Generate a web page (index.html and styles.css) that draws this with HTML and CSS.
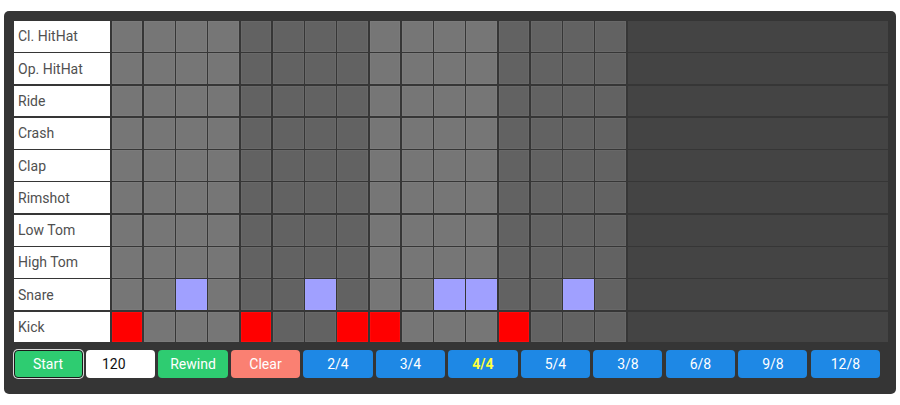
FILE: index.html
```html
<!DOCTYPE html>
<html>
<head>
<meta charset="utf-8">
<link rel="stylesheet" href="styles.css">
</head>
<body>
<div class="machine">
  <div class="grid">
    <div class="label">Cl. HitHat</div>
    <div class="c"></div><div class="c"></div><div class="c"></div><div class="c"></div>
    <div class="c d"></div><div class="c d"></div><div class="c d"></div><div class="c d"></div>
    <div class="c"></div><div class="c"></div><div class="c"></div><div class="c"></div>
    <div class="c d"></div><div class="c d"></div><div class="c d"></div><div class="c d"></div>
    <div class="rest"></div>

    <div class="label">Op. HitHat</div>
    <div class="c"></div><div class="c"></div><div class="c"></div><div class="c"></div>
    <div class="c d"></div><div class="c d"></div><div class="c d"></div><div class="c d"></div>
    <div class="c"></div><div class="c"></div><div class="c"></div><div class="c"></div>
    <div class="c d"></div><div class="c d"></div><div class="c d"></div><div class="c d"></div>
    <div class="rest"></div>

    <div class="label">Ride</div>
    <div class="c"></div><div class="c"></div><div class="c"></div><div class="c"></div>
    <div class="c d"></div><div class="c d"></div><div class="c d"></div><div class="c d"></div>
    <div class="c"></div><div class="c"></div><div class="c"></div><div class="c"></div>
    <div class="c d"></div><div class="c d"></div><div class="c d"></div><div class="c d"></div>
    <div class="rest"></div>

    <div class="label">Crash</div>
    <div class="c"></div><div class="c"></div><div class="c"></div><div class="c"></div>
    <div class="c d"></div><div class="c d"></div><div class="c d"></div><div class="c d"></div>
    <div class="c"></div><div class="c"></div><div class="c"></div><div class="c"></div>
    <div class="c d"></div><div class="c d"></div><div class="c d"></div><div class="c d"></div>
    <div class="rest"></div>

    <div class="label">Clap</div>
    <div class="c"></div><div class="c"></div><div class="c"></div><div class="c"></div>
    <div class="c d"></div><div class="c d"></div><div class="c d"></div><div class="c d"></div>
    <div class="c"></div><div class="c"></div><div class="c"></div><div class="c"></div>
    <div class="c d"></div><div class="c d"></div><div class="c d"></div><div class="c d"></div>
    <div class="rest"></div>

    <div class="label">Rimshot</div>
    <div class="c"></div><div class="c"></div><div class="c"></div><div class="c"></div>
    <div class="c d"></div><div class="c d"></div><div class="c d"></div><div class="c d"></div>
    <div class="c"></div><div class="c"></div><div class="c"></div><div class="c"></div>
    <div class="c d"></div><div class="c d"></div><div class="c d"></div><div class="c d"></div>
    <div class="rest"></div>

    <div class="label">Low Tom</div>
    <div class="c"></div><div class="c"></div><div class="c"></div><div class="c"></div>
    <div class="c d"></div><div class="c d"></div><div class="c d"></div><div class="c d"></div>
    <div class="c"></div><div class="c"></div><div class="c"></div><div class="c"></div>
    <div class="c d"></div><div class="c d"></div><div class="c d"></div><div class="c d"></div>
    <div class="rest"></div>

    <div class="label">High Tom</div>
    <div class="c"></div><div class="c"></div><div class="c"></div><div class="c"></div>
    <div class="c d"></div><div class="c d"></div><div class="c d"></div><div class="c d"></div>
    <div class="c"></div><div class="c"></div><div class="c"></div><div class="c"></div>
    <div class="c d"></div><div class="c d"></div><div class="c d"></div><div class="c d"></div>
    <div class="rest"></div>

    <div class="label">Snare</div>
    <div class="c"></div><div class="c"></div><div class="c snare"></div><div class="c"></div>
    <div class="c d"></div><div class="c d"></div><div class="c snare"></div><div class="c d"></div>
    <div class="c"></div><div class="c"></div><div class="c snare"></div><div class="c snare"></div>
    <div class="c d"></div><div class="c d"></div><div class="c snare"></div><div class="c d"></div>
    <div class="rest"></div>

    <div class="label">Kick</div>
    <div class="c kick"></div><div class="c"></div><div class="c"></div><div class="c"></div>
    <div class="c kick"></div><div class="c d"></div><div class="c d"></div><div class="c kick"></div>
    <div class="c kick"></div><div class="c"></div><div class="c"></div><div class="c"></div>
    <div class="c kick"></div><div class="c d"></div><div class="c d"></div><div class="c d"></div>
    <div class="rest"></div>
  </div>

  <div class="controls">
    <button class="btn green start">Start</button>
    <input class="tempo" type="text" value="120">
    <button class="btn green">Rewind</button>
    <button class="btn salmon">Clear</button>
    <button class="btn blue">2/4</button>
    <button class="btn blue">3/4</button>
    <button class="btn blue active">4/4</button>
    <button class="btn blue">5/4</button>
    <button class="btn blue">3/8</button>
    <button class="btn blue">6/8</button>
    <button class="btn blue">9/8</button>
    <button class="btn blue">12/8</button>
  </div>
</div>
</body>
</html>
```
FILE: styles.css
```css
html, body {
  margin: 0;
  padding: 0;
  background: #ffffff;
  font-family: Roboto, "Liberation Sans", sans-serif;
}

.machine {
  margin: 11px 0 0 4px;
  width: 892px;
  box-sizing: border-box;
  padding: 10px 8px 15.5px 10px;
  background: #353535;
  border-radius: 5px;
}

.grid {
  display: grid;
  grid-template-columns: 96px repeat(16, 30.75px) 1fr;
  grid-auto-rows: 30.8px;
  gap: 1.5px;
  background: #363636;
}

.label {
  background: #ffffff;
  color: #505050;
  font-size: 14px;
  display: flex;
  align-items: center;
  padding-left: 4px;
}

.c {
  background: #767676;
  box-shadow: inset 0 0 0 1px rgba(255, 255, 255, 0.04);
}

.c.d {
  background: #626262;
}

.c.snare {
  background: #a0a0ff;
}

.c.kick {
  background: #ff0000;
}

.rest {
  background: #444444;
}

.controls {
  display: flex;
  gap: 3.4px;
  margin-top: 8px;
  margin-left: -0.5px;
}

.btn, .tempo {
  width: 69.1px;
  height: 28px;
  box-sizing: border-box;
  border: none;
  border-radius: 4px;
  font-family: Roboto, "Liberation Sans", sans-serif;
  font-size: 14px;
  color: #ffffff;
  padding: 0;
  flex: none;
}

.green {
  background: #2ecc71;
}

.start {
  border: 1.5px solid #1a1a1a;
  box-shadow: 0 0 0 1px #d8d8d8;
}

.salmon {
  background: #fa8072;
}

.blue {
  background: #1e88e5;
}

.blue.active {
  color: #ffff3c;
  font-weight: bold;
}

.tempo {
  background: #ffffff;
  color: #111111;
  padding-left: 16px;
  outline: none;
}
```
